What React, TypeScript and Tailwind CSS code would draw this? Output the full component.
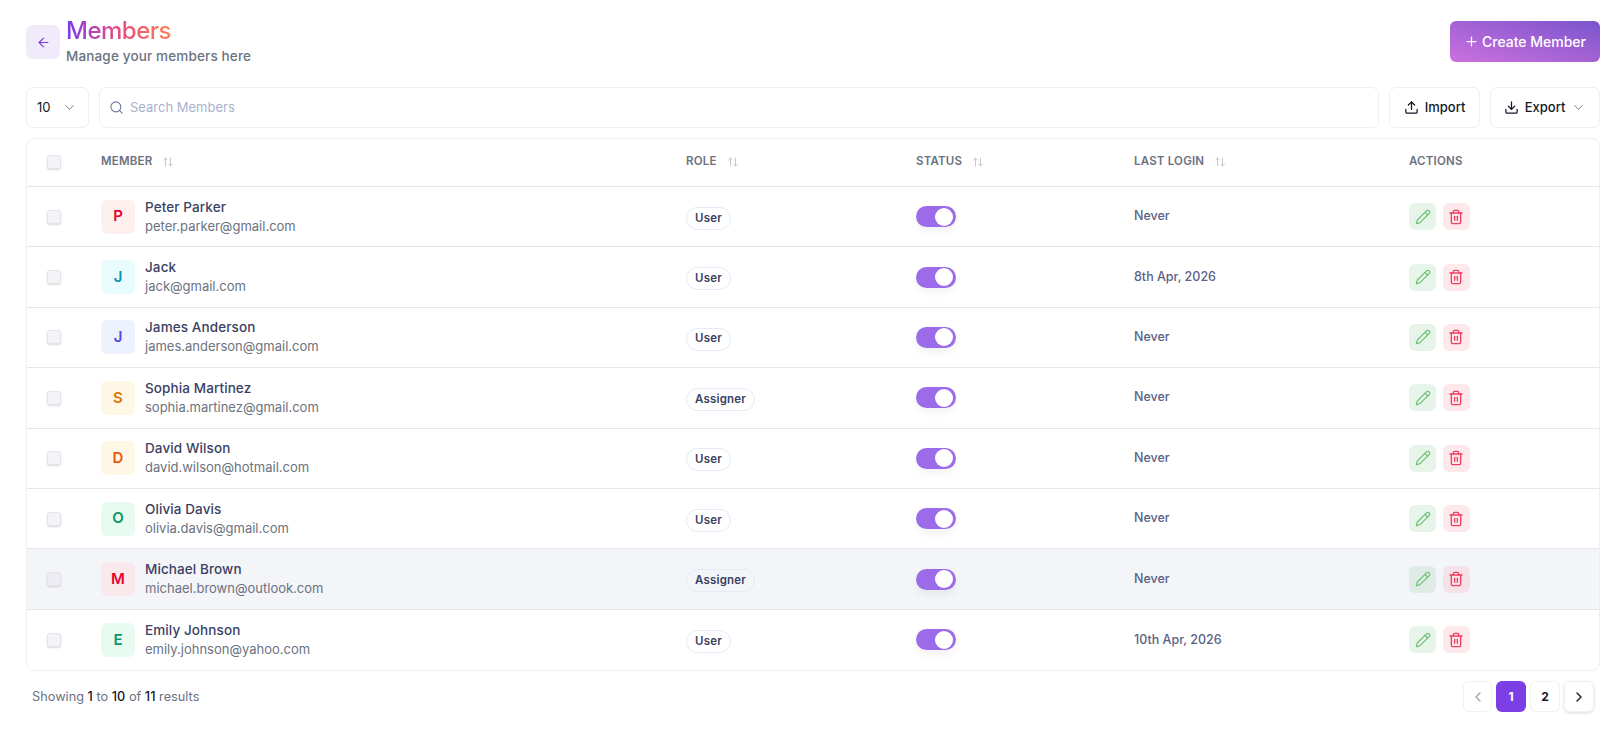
import { ArrowLeft, ArrowUpDown, ChevronDown, ChevronLeft, ChevronRight, Download, Pencil, Plus, Search, Trash2, Upload } from "lucide-react";

const members = [
  { name: "Peter Parker", email: "peter.parker@gmail.com", role: "User", login: "Never", letter: "P", avatar: "bg-[#fff0f0] text-[#e7042c]" },
  { name: "Jack", email: "jack@gmail.com", role: "User", login: "8th Apr, 2026", letter: "J", avatar: "bg-[#e9fcfd] text-[#0891b2]" },
  { name: "James Anderson", email: "james.anderson@gmail.com", role: "User", login: "Never", letter: "J", avatar: "bg-[#eef2ff] text-[#4f46e5]" },
  { name: "Sophia Martinez", email: "sophia.martinez@gmail.com", role: "Assigner", login: "Never", letter: "S", avatar: "bg-[#fff7e6] text-[#d97706]" },
  { name: "David Wilson", email: "david.wilson@hotmail.com", role: "User", login: "Never", letter: "D", avatar: "bg-[#fff7e6] text-[#ea580c]" },
  { name: "Olivia Davis", email: "olivia.davis@gmail.com", role: "User", login: "Never", letter: "O", avatar: "bg-[#e8fbf1] text-[#059669]" },
  { name: "Michael Brown", email: "michael.brown@outlook.com", role: "Assigner", login: "Never", letter: "M", avatar: "bg-[#f9e9ec] text-[#e7042c]", hovered: true },
  { name: "Emily Johnson", email: "emily.johnson@yahoo.com", role: "User", login: "10th Apr, 2026", letter: "E", avatar: "bg-[#e8fbf1] text-[#059669]" },
];

function SortIcon() {
  return <ArrowUpDown className="ml-[10px] h-[12px] w-[12px] text-[#c4c8d0]" strokeWidth={2} />;
}

function Checkbox({ muted }: { muted?: boolean }) {
  return (
    <div className={"h-[14px] w-[14px] rounded-[3px] border border-[#e4e4ea] shadow-[0_1px_2px_rgba(0,0,0,0.15)] " + (muted ? "bg-[#ecedf2]" : "bg-[#f4f4f8]")} />
  );
}

export default function App() {
  return (
    <div className="h-[733px] w-[1611px] overflow-hidden bg-white px-[26px] pr-[11px] font-['Inter',sans-serif]">
      {/* page header */}
      <div className="flex h-[87px] items-start justify-between pt-[17px]">
        <div className="flex items-start">
          <button className="mt-[8px] flex h-[34px] w-[34px] items-center justify-center rounded-[7px] bg-[#f0eafb] text-[#7c3aed]">
            <ArrowLeft className="h-[15px] w-[15px]" strokeWidth={1.75} />
          </button>
          <div className="ml-[6px]">
            <h1 className="bg-[linear-gradient(90deg,#7c3aed_0%,#e8497f_28%,#ff8a4c_62%,#ff5f6d_100%)] bg-clip-text text-[24px] leading-[27px] font-medium tracking-[-0.5px] text-transparent">
              Members
            </h1>
            <p className="mt-[3px] text-[13.5px] leading-[18px] font-medium tracking-[0.15px] text-[#6b7280]">Manage your members here</p>
          </div>
        </div>
        <button className="mt-[4px] flex h-[41px] w-[150px] items-center justify-center gap-[3px] rounded-[6px] bg-[linear-gradient(to_top_right,#cc70de,#7a55cc)] text-[14px] font-medium text-white">
          <Plus className="h-[15px] w-[15px]" strokeWidth={2} />
          Create Member
        </button>
      </div>

      {/* toolbar */}
      <div className="flex h-[41px] gap-[10px]">
        <button className="flex w-[63px] items-center justify-between rounded-[7px] border border-[#eeeff2] pr-[11px] pl-[10px] text-[13px] font-normal text-[#111827]">
          10
          <ChevronDown className="h-[15px] w-[15px] text-[#6b7280]" strokeWidth={1.5} />
        </button>
        <div className="flex flex-1 items-center gap-[6px] rounded-[7px] border border-[#eeeff2] pl-[9px] text-[13px] text-[#a9b1cf]">
          <Search className="h-[15px] w-[15px] text-[#6b7a99]" strokeWidth={1.75} />
          Search Members
        </div>
        <button className="flex w-[91px] items-center justify-center gap-[6px] rounded-[7px] border border-[#eeeff2] text-[13px] font-medium text-[#111827]">
          <Upload className="h-[15px] w-[15px]" strokeWidth={2} />
          Import
        </button>
        <button className="flex w-[110px] items-center justify-center gap-[6px] rounded-[7px] border border-[#eeeff2] text-[13px] font-medium text-[#111827]">
          <Download className="h-[15px] w-[15px]" strokeWidth={2} />
          Export
          <ChevronDown className="h-[15px] w-[15px] text-[#6b7280]" strokeWidth={1.5} />
        </button>
      </div>

      {/* table */}
      <div className="mt-[10px] overflow-hidden rounded-[8px] border border-[#eeeff2]">
        <div className="flex h-[48px] items-center border-b border-[#e5e7eb] pb-[2px] text-[11.5px] font-semibold tracking-[0.2px] text-[#6b7280]">
          <div className="w-[74px] pl-[20px]"><Checkbox /></div>
          <div className="flex w-[585px] items-center">MEMBER<SortIcon /></div>
          <div className="flex w-[230px] items-center">ROLE<SortIcon /></div>
          <div className="flex w-[218px] items-center">STATUS<SortIcon /></div>
          <div className="flex w-[275px] items-center">LAST LOGIN<SortIcon /></div>
          <div>ACTIONS</div>
        </div>
        {members.map((m) => (
          <div key={m.email} className={"flex h-[60.4px] items-center border-b border-[#e5e7eb] last:border-b-0 " + (m.hovered ? "bg-[#f4f5f9]" : "")}>
            <div className="w-[74px] pl-[20px]"><Checkbox muted={m.hovered} /></div>
            <div className="flex w-[585px] items-center gap-[10px]">
              <div className={"flex h-[34px] w-[34px] items-center justify-center rounded-[6px] text-[15px] font-semibold " + m.avatar}>{m.letter}</div>
              <div>
                <div className="text-[13.5px] leading-[19px] font-medium tracking-[0.1px] text-[#3b4163]">{m.name}</div>
                <div className="text-[13px] leading-[19px] text-[#6b7280]">{m.email}</div>
              </div>
            </div>
            <div className="w-[230px]">
              <span className="inline-flex h-[23px] items-center rounded-full border border-[#e4eaf7] px-[8px] text-[11.5px] font-semibold tracking-[0.2px] text-[#3b4163]">{m.role}</span>
            </div>
            <div className="w-[218px]">
              <div className="flex h-[21px] w-[40px] items-center justify-end rounded-full bg-[#9b6bea] pr-[3px] shadow-[0_4px_8px_rgba(0,0,0,0.06)]">
                <div className="h-[18px] w-[18px] rounded-full bg-white" />
              </div>
            </div>
            <div className="w-[275px] text-[12.5px] font-medium text-[#5a6285]">{m.login}</div>
            <div className="flex gap-[7px]">
              <button className={"flex h-[27px] w-[27px] items-center justify-center rounded-[6px] text-[#6cc070] " + (m.hovered ? "bg-[#dfece6]" : "bg-[#e7f4ea]")}>
                <Pencil className="h-[16px] w-[16px]" strokeWidth={1.75} />
              </button>
              <button className={"flex h-[27px] w-[27px] items-center justify-center rounded-[6px] pr-[1px] text-[#f0405f] " + (m.hovered ? "bg-[#f5e2e8]" : "bg-[#fde8ec]")}>
                <Trash2 className="h-[16px] w-[16px]" strokeWidth={2} />
              </button>
            </div>
          </div>
        ))}
      </div>

      {/* pagination */}
      <div className="mt-[10px] flex items-center justify-between pr-[6px] pl-[6px]">
        <p className="text-[12.75px] text-[#6b7280]">
          Showing <span className="font-medium text-[#111827]">1</span> to <span className="font-medium text-[#111827]">10</span> of <span className="font-medium text-[#111827]">11</span> results
        </p>
        <div className="flex gap-[4px]">
          <button className="flex h-[31px] w-[29px] items-center justify-center rounded-[6px] border border-[#f1f1f4] text-[#9ca3af]">
            <ChevronLeft className="h-[16px] w-[16px]" strokeWidth={2} />
          </button>
          <button className="flex h-[31px] w-[30px] items-center justify-center rounded-[6px] bg-[#7c3fe6] text-[12px] font-bold text-white">1</button>
          <button className="flex h-[31px] w-[30px] items-center justify-center rounded-[6px] border border-[#f1f1f4] text-[12px] font-bold text-[#111827]">2</button>
          <button className="flex h-[31px] w-[30px] items-center justify-center rounded-[6px] border border-[#f1f1f4] text-[#111827] shadow-[0_1px_3px_rgba(0,0,0,0.15)]">
            <ChevronRight className="h-[16px] w-[16px]" strokeWidth={2} />
          </button>
        </div>
      </div>
    </div>
  );
}
